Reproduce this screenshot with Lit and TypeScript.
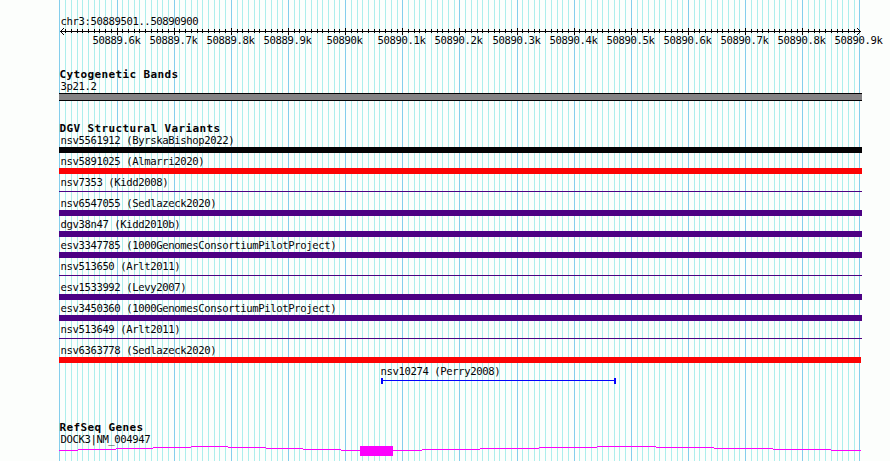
import {css, html, LitElement, svg} from "lit";
import {customElement, property} from "lit/decorators.js";
import {styleMap} from "lit/directives/style-map.js";

const START = 50889501
const END = 50890900
const PX_PER_BASE = 4 / 7

// x inside the panel, whose left edge is one pixel before the first base
const toX = (pos: number) => Math.round(1 + (pos - START) * PX_PER_BASE)

const GRID = Array.from({length: 141}, (_, i) => ({
  x: toX(START - 1 + i * 10),
  major: i % 10 === 0,
  label: `${(START - 1 + i * 10) / 1000}k`,
}))

interface Variant {
  name: string
  kind: string
  offset?: number
}

const VARIANTS: Variant[] = [
  {name: 'nsv5561912 (ByrskaBishop2022)', kind: 'black'},
  {name: 'nsv5891025 (Almarri2020)', kind: 'red'},
  {name: 'nsv7353 (Kidd2008)', kind: 'thin'},
  {name: 'nsv6547055 (Sedlazeck2020)', kind: 'indigo'},
  {name: 'dgv38n47 (Kidd2010b)', kind: 'indigo'},
  {name: 'esv3347785 (1000GenomesConsortiumPilotProject)', kind: 'indigo'},
  {name: 'nsv513650 (Arlt2011)', kind: 'thin'},
  {name: 'esv1533992 (Levy2007)', kind: 'indigo'},
  {name: 'esv3450360 (1000GenomesConsortiumPilotProject)', kind: 'indigo'},
  {name: 'nsv513649 (Arlt2011)', kind: 'thin'},
  {name: 'nsv6363778 (Sedlazeck2020)', kind: 'red short'},
  {name: 'nsv10274 (Perry2008)', kind: 'range', offset: 320},
]

// [start, end, y] steps of the intron hats on both sides of the exon
const INTRONS = [
  [0, 19, 4], [19, 57, 3], [57, 94, 2], [94, 132, 1], [132, 169, 0],
  [169, 207, 1], [207, 244, 2], [244, 282, 3], [282, 301, 4],
  [334, 363, 4], [363, 421, 3], [421, 480, 2], [480, 538, 1], [538, 597, 0],
  [597, 655, 1], [655, 714, 2], [714, 772, 3], [772, 802, 4],
]

@customElement('scale-ruler')
export class ScaleRuler extends LitElement {

  static styles = css`
    :host {
      display: block;
    }

    svg {
      display: block;
      overflow: visible;
      shape-rendering: crispEdges;
    }

    path {
      fill: none;
      stroke: #040204;
    }

    text {
      fill: #040204;
      font: 10.6px "DejaVu Sans Mono", monospace;
      letter-spacing: -0.38px;
      text-anchor: middle;
    }
  `

  render() {
    const ticks = GRID.slice(1, -1).map(({x, major}) =>
      major ? `M${x + .5} 0v7` : `M${x + .5} 1v4`).join('')

    return svg`
      <svg width="831" height="18">
        <path d="M1 3.5H802"></path>
        <path d=${ticks}></path>
        <path d="M5 0L1.5 3.5L5 7M798 0L801.5 3.5L798 7"></path>
        ${GRID.filter(g => g.major).slice(1).map(g => svg`
          <text x=${g.x - .5} y="16">${g.label}</text>
        `)}
      </svg>
    `
  }
}

@customElement('variant-row')
export class VariantRow extends LitElement {

  static styles = css`
    :host {
      display: block;
      height: 21px;
    }

    .name {
      font: 10.6px/13px "DejaVu Sans Mono", monospace;
      height: 13px;
      letter-spacing: -0.38px;
      padding-left: 1.4px;
      white-space: pre;
    }

    .bar {
      height: 6px;
    }

    .black {
      background: #040204;
    }

    .red {
      background: #fc0204;
    }

    .indigo {
      background: #4c0284;
    }

    .short {
      width: 802px;
    }

    .thin {
      background: #4c0284;
      height: 1px;
      margin-top: 2px;
    }

    .range {
      border: solid #0402fc;
      border-width: 0 2px;
      box-sizing: border-box;
      margin-left: 2px;
      padding-top: 2px;
      width: 235px;
    }

    .range::before {
      background: #0402fc;
      content: "";
      display: block;
      height: 1px;
    }
  `

  @property()
  name: string

  @property()
  kind: string

  @property({type: Number})
  offset: number = 0

  render() {
    const indent = styleMap({paddingLeft: `${this.offset}px`})

    return html`
      <div style="${indent}">
        <div class="name">${this.name}</div>
        <div class="bar ${this.kind}"></div>
      </div>
    `
  }
}

@customElement('app-root')
export class AppRoot extends LitElement {

  static styles = css`
    :host {
      background: #fcfefc;
      color: #040204;
      display: block;
      height: 461px;
      overflow: hidden;
      width: 890px;
    }

    .panel {
      box-sizing: border-box;
      height: 461px;
      margin-left: 59px;
      padding-top: 15px;
      position: relative;
      width: 803px;
    }

    .grid {
      inset: 0;
      position: absolute;
      shape-rendering: crispEdges;
    }

    .minor {
      fill: #aceeec;
    }

    .major {
      fill: #84ceec;
    }

    .tracks {
      position: relative;
    }

    .label {
      font: 10.6px/13px "DejaVu Sans Mono", monospace;
      height: 13px;
      letter-spacing: -0.38px;
      padding-left: 1.4px;
      white-space: pre;
    }

    .title {
      font: bold 11px/13px "DejaVu Sans Mono", monospace;
      height: 12px;
      letter-spacing: 0.378px;
      padding-left: 0.4px;
      white-space: pre;
    }

    .cytoband {
      background: #848284;
      border: solid #040204;
      border-width: 1px 0;
      height: 6px;
    }

    .bands {
      margin-top: 22px;
    }

    .variants {
      margin-top: 21px;
    }

    .genes {
      margin-top: 35px;
    }

    .gene {
      display: block;
      fill: #fc02fc;
      shape-rendering: crispEdges;
    }
  `

  render() {
    return html`
      <div class="panel">
        <svg class="grid" width="803" height="461">
          ${GRID.map(g => svg`
            <rect class=${g.major ? 'major' : 'minor'} x=${g.x} y="0" width="1" height="461"></rect>
          `)}
        </svg>
        <div class="tracks">
          <div class="label">chr3:${START}..${END}</div>
          <scale-ruler></scale-ruler>
          <div class="bands">
            <div class="title">Cytogenetic Bands</div>
            <div class="label">3p21.2</div>
            <div class="cytoband"></div>
          </div>
          <div class="variants">
            <div class="title">DGV Structural Variants</div>
            ${VARIANTS.map(v => html`
              <variant-row .name=${v.name} .kind=${v.kind} .offset=${v.offset ?? 0}></variant-row>
            `)}
          </div>
          <div class="genes">
            <div class="title">RefSeq Genes</div>
            <div class="label">DOCK3|NM_004947</div>
            <svg class="gene" width="803" height="10">
              ${INTRONS.map(([from, to, y]) => svg`
                <rect x=${from} y=${y} width=${to - from} height="1"></rect>
              `)}
              <rect x="301" y="0" width="33" height="10"></rect>
            </svg>
          </div>
        </div>
      </div>
    `
  }
}
